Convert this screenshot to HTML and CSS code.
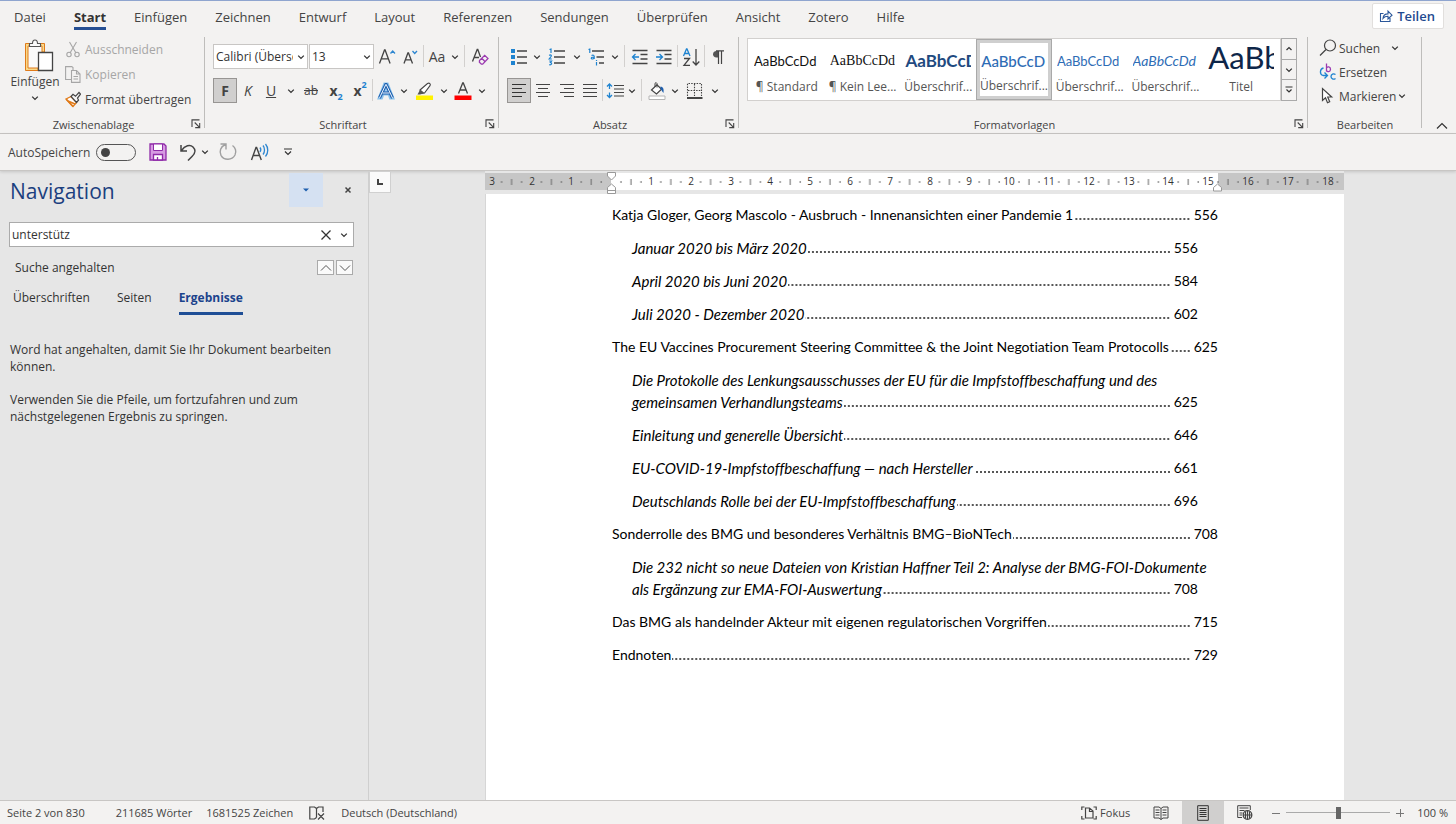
FILE: index.html
```html
<!DOCTYPE html>
<html lang="de">
<head>
<meta charset="utf-8">
<title>Navigation</title>
<link rel="stylesheet" href="styles.css">
</head>
<body>
<svg class="defs" aria-hidden="true">
  <symbol id="chev" viewBox="0 0 8 8"><path d="M1.2 2.6 4 5.4 6.8 2.6" fill="none" stroke="#333" stroke-width="1.3"/></symbol>
  <symbol id="launch" viewBox="0 0 10 10"><path d="M1 8V.9H8.500M3.700 3.500 8.300 8.100M8.700 4V8.600H4.200" fill="none" stroke="#444" stroke-width="1.100"/></symbol>
</svg>

<header class="tabbar">
  <nav class="tabs">
    <button>Datei</button><button class="active">Start</button><button>Einfügen</button><button>Zeichnen</button><button>Entwurf</button><button>Layout</button><button>Referenzen</button><button>Sendungen</button><button>Überprüfen</button><button>Ansicht</button><button>Zotero</button><button>Hilfe</button>
  </nav>
  <button class="share"><svg width="14" height="14" viewBox="0 0 14 14" fill="none" stroke="#2b579a" stroke-width="1.100"><path d="M4.500 4.500H1.500v8h9.500V9M4 9.500c.3-3 2-4.600 5-4.600V2.200l4 4-4 3.700V7.300C7 7.200 5.300 7.900 4 9.500z"/></svg>Teilen</button>
</header>

<div class="ribbon">
  <section class="group clipboard">
    <div class="content">
      <button class="paste">
        <svg width="32" height="34" viewBox="0 0 32 34" fill="none"><path d="M4.500 5.500h17V13H16v17.500H4.500z" fill="#fafafa"/><path d="M8 4.500H3.500v27H16V29H6V7h2zM18 4.500h4.500V13H20V7h-2z" fill="#f8d98a" stroke="#e07b1a"/><path d="M7.500 7.500h11v-3h-3C15.500 2 14.500 1 13 1s-2.500 1-2.500 3.500h-3z" fill="#fafafa" stroke="#555" stroke-width="1.100"/><path d="M16.500 13.500h14v18h-14z" fill="#fff" stroke="#444" stroke-width="1.300"/></svg>
        <span>Einfügen</span><svg class="chev"><use href="#chev"/></svg>
      </button>
      <div class="stack">
        <button class="off"><svg width="16" height="17" viewBox="0 0 16 17" fill="none" stroke="#a6a6a6" stroke-width="1.100"><path d="M4.500 1 11 12M11.500 1 5 12"/><circle cx="4" cy="13.500" r="2.200"/><circle cx="12" cy="13.500" r="2.200"/></svg>Ausschneiden</button>
        <button class="off"><svg width="16" height="17" viewBox="0 0 16 17" fill="none" stroke="#a6a6a6" stroke-width="1.100"><path d="M6 13.500H.6V.6h6.200l1.200 1V4"/><path d="M6.500 4.500h5l3.500 3.500v8.400H6.500zM11.500 4.500V8H15M8.500 10.500h4.500M8.500 13h4.500"/></svg>Kopieren</button>
        <button><svg width="16" height="17" viewBox="0 0 16 17" fill="none"><path d="m1 8 5-2.500 5.500 6L8 15.500z" fill="#fff" stroke="#e07b1a" stroke-width="1.300"/><path d="m3 10 7 3M1.500 8.500 8 15.500" stroke="#e07b1a" stroke-width="1.500"/><path d="m6 5.500 2-2.200 2.500 2L14 1.500l1.500 1.600-3 4 1 2-2 2.400z" fill="#f5f5f5" stroke="#444" stroke-width="1.200"/></svg>Format übertragen</button>
      </div>
    </div>
    <footer><span>Zwischenablage</span><button class="launcher" aria-label="Zwischenablage öffnen"><svg width="10" height="10"><use href="#launch"/></svg></button></footer>
  </section>

  <section class="group font">
    <div class="content rows">
      <div class="row">
        <select class="family" aria-label="Schriftart"><option>Calibri (Überschriften)</option></select>
        <select class="size" aria-label="Schriftgrad"><option>13</option></select>
        <button class="w22" aria-label="Größer"><svg width="18" height="18" viewBox="0 0 18 18" fill="none"><path d="M1.500 15.500 6.500 2h.6l5 13.500M3.300 10.800h7" stroke="#444" stroke-width="1.300"/><path d="m12.500 5.500 2.200-2.500L17 5.500" stroke="#2d86d0" stroke-width="1.300"/></svg></button>
        <button class="w24" aria-label="Kleiner"><svg width="18" height="18" viewBox="0 0 18 18" fill="none"><path d="M3 15.500 6.900 5h.6l4 10.500M4.500 11.800h5.400" stroke="#444" stroke-width="1.300"/><path d="m11.500 3 2.200 2.500L16 3" stroke="#2d86d0" stroke-width="1.300"/></svg></button>
        <i class="sep"></i>
        <button class="w24 aa">Aa</button><button class="w12" aria-label="Optionen"><svg class="chev"><use href="#chev"/></svg></button>
        <i class="sep wide"></i>
        <button class="w24" aria-label="Formatierung löschen"><svg width="18" height="18" viewBox="0 0 18 18" fill="none"><path d="M1.500 13.500 6.200 1.500h.6L9.500 9M3.200 9.500H8" stroke="#444" stroke-width="1.300"/><path d="m8.500 12.500 5.200-5.200 3.300 3.200-5.300 5.700h-1.300l-2-2zM10.700 10.300l3.500 3.500" stroke="#9b3ab0" stroke-width="1.300"/></svg></button>
      </div>
      <div class="row">
        <button class="w24 on"><b>F</b></button>
        <button class="w22"><em>K</em></button>
        <button class="w24"><u>U</u></button><button class="w16" aria-label="Optionen"><svg class="chev"><use href="#chev"/></svg></button>
        <button class="w24"><s>ab</s></button>
        <button class="w26 script"><b>x</b><sub>2</sub></button>
        <button class="w22 script"><b>x</b><sup>2</sup></button>
        <i class="sep"></i>
        <button class="w24" aria-label="Texteffekte"><svg width="18" height="18" viewBox="0 0 18 18" fill="none"><path d="M1.500 16.500 7.300 1.500h3.400l5.800 15h-3.400l-1.400-4H6.300l-1.400 4zM7.200 9.700h3.600L9 4.500z" fill="#d8ebfa" stroke="#8cc4ee" stroke-width="2"/><path d="M2.500 16 8.800 2.500h.4L15.500 16M5.500 11h7" stroke="#1e5fae" stroke-width="3"/><path d="M2.500 16 8.800 2.500h.4L15.500 16M5.500 11h7" stroke="#eef7ff" stroke-width="1"/></svg></button><button class="w12" aria-label="Optionen"><svg class="chev"><use href="#chev"/></svg></button>
        <button class="w28" aria-label="Hervorheben"><svg width="18" height="18" viewBox="0 0 18 18"><path d="m5 8 7.500-6.500c2-1 3.500.4 2.500 2.200L9.500 11 7 11.200z" fill="#fff" stroke="#444" stroke-width="1.100"/><path d="M5.200 7.500 9.600 11l-2 .8L5 12.500H2.500z" fill="#555"/><path d="M1 13.500h17V18H1z" fill="#fff200"/></svg></button><button class="w12" aria-label="Optionen"><svg class="chev"><use href="#chev"/></svg></button>
        <button class="w26" aria-label="Schriftfarbe"><svg width="18" height="18" viewBox="0 0 18 18"><path d="M4.500 11.500 8.700 1h.6l4.200 10.500M6 8h6" fill="none" stroke="#444" stroke-width="1.300"/><path d="M.5 13.500h17V18H.5z" fill="#f00"/></svg></button><button class="w12" aria-label="Optionen"><svg class="chev"><use href="#chev"/></svg></button>
      </div>
    </div>
    <footer><span>Schriftart</span><button class="launcher" aria-label="Schriftart öffnen"><svg width="10" height="10"><use href="#launch"/></svg></button></footer>
  </section>

  <section class="group para">
    <div class="content rows">
      <div class="row">
        <button class="w24" aria-label="Aufzählung"><svg width="18" height="18" viewBox="0 0 18 18"><path d="M1 1h4v4H1zM1 7h4v4H1zM1 13h4v4H1z" fill="#1e83d0"/><path d="M7 3h10M7 9h10M7 15h10" stroke="#444" stroke-width="1.300"/></svg></button><button class="w12" aria-label="Optionen"><svg class="chev"><use href="#chev"/></svg></button>
        <button class="w28" aria-label="Nummerierung"><svg width="18" height="18" viewBox="0 0 18 18"><path d="M1.500 1.500 3 1v4M1.200 7.500c1-1 2.600-.4 2 .8L1.200 11h2.600M1.200 13h2.400l-1.200 1.500c2 .3 1.500 2.700-1.200 2.200" fill="none" stroke="#1e83d0" stroke-width="1.200"/><path d="M6 3h11M6 9h11M6 15h11" stroke="#444" stroke-width="1.300"/></svg></button><button class="w12" aria-label="Optionen"><svg class="chev"><use href="#chev"/></svg></button>
        <button class="w26" aria-label="Liste mit mehreren Ebenen"><svg width="18" height="18" viewBox="0 0 18 18"><path d="M1.500 1.500 2.800 1v4M4.500 7.500c1.500-.7 2.700-.3 2.700 1V11M7 9c-1.500 0-2.700.3-2.700 1.200 0 1.200 2.200 1 2.700-.2M9.500 14v3.500M9.500 12v1" fill="none" stroke="#1e83d0" stroke-width="1.200"/><path d="M5 3h12M9.500 9H17M12 15h5" stroke="#444" stroke-width="1.300"/></svg></button><button class="w12" aria-label="Optionen"><svg class="chev"><use href="#chev"/></svg></button>
        <i class="sep wide"></i>
        <button class="w24" aria-label="Einzug verkleinern"><svg width="18" height="18" viewBox="0 0 18 18" fill="none"><path d="M1.500 2.500h15M9.500 6.500h7M9.500 11h7M1.500 15.500h15" stroke="#444" stroke-width="1.300"/><path d="M8 9H1.500M4.500 6l-3 3 3 3" stroke="#1e83d0" stroke-width="1.300"/></svg></button>
        <button class="w24" aria-label="Einzug vergrößern"><svg width="18" height="18" viewBox="0 0 18 18" fill="none"><path d="M1.500 2.500h15M9.500 6.500h7M9.500 11h7M1.500 15.500h15" stroke="#444" stroke-width="1.300"/><path d="M1 9h6.500M4.500 6l3 3-3 3" stroke="#1e83d0" stroke-width="1.300"/></svg></button>
        <i class="sep"></i>
        <button class="w24" aria-label="Sortieren"><svg width="18" height="20" viewBox="0 0 18 20" fill="none"><path d="M1.500 9 4.500 2h.5l3 7M2.500 6.500H7" stroke="#1e83d0" stroke-width="1.300"/><path d="M2 11.500h5.500l-5.500 6.800h6M14 2v16M10.700 14.500 14 18l3.300-3.500" stroke="#444" stroke-width="1.300"/></svg></button>
        <i class="sep"></i>
        <button class="w24" aria-label="Formatierungszeichen"><svg width="14" height="18" viewBox="0 0 14 18"><path d="M7 3H5.500C3.200 3 2 4.500 2 6.200s1.300 3.200 3.500 3.200H7z" fill="#555"/><path d="M7.500 16V3M10.500 16V3M5 2.800h8" fill="none" stroke="#444" stroke-width="1.200"/></svg></button>
      </div>
      <div class="row">
        <button class="w24 on" aria-label="Linksbündig"><svg width="16" height="16" viewBox="0 0 16 16" stroke="#333" stroke-width="1.200"><path d="M1 1.500h14M1 5.500h10M1 9.500h14M1 13.500h10"/></svg></button>
        <button class="w24" aria-label="Zentriert"><svg width="16" height="16" viewBox="0 0 16 16" stroke="#444" stroke-width="1.200"><path d="M1 1.500h14M3 5.500h10M1 9.500h14M3 13.500h10"/></svg></button>
        <button class="w24" aria-label="Rechtsbündig"><svg width="16" height="16" viewBox="0 0 16 16" stroke="#444" stroke-width="1.200"><path d="M1 1.500h14M5 5.500h10M1 9.500h14M5 13.500h10"/></svg></button>
        <button class="w22" aria-label="Blocksatz"><svg width="16" height="16" viewBox="0 0 16 16" stroke="#444" stroke-width="1.200"><path d="M1 1.500h14M1 5.500h14M1 9.500h14M1 13.500h14"/></svg></button>
        <i class="sep"></i>
        <button class="w22" aria-label="Zeilenabstand"><svg width="18" height="18" viewBox="0 0 18 18" fill="none"><path d="M8 3.500h10M8 7h10M8 10.500h10M8 14h10" stroke="#444" stroke-width="1.200"/><path d="M3.500 2v5M1 4.500 3.500 2 6 4.500M3.500 10.500v5M1 13l2.500 2.500L6 13" stroke="#1e83d0" stroke-width="1.300"/></svg></button><button class="w12" aria-label="Optionen"><svg class="chev"><use href="#chev"/></svg></button>
        <i class="sep wide"></i>
        <button class="w24" aria-label="Schattierung"><svg width="18" height="18" viewBox="0 0 18 18"><path d="m3.500 8 5.500-5.200 4.500 4.400L8.500 12z" fill="#fff" stroke="#444" stroke-width="1.200"/><path d="M9 5.500V1.500c-.8-1.500-2-1-2 .5v3" fill="none" stroke="#444"/><path d="M12.500 4.500c3 .3 3.500 3 3 6.500-1.500-1-1.500-3-3-4z" fill="#1e5fae"/><path d="M1 14h16v3.500H1z" fill="#fff" stroke="#b5b5b5"/></svg></button><button class="w12" aria-label="Optionen"><svg class="chev"><use href="#chev"/></svg></button>
        <button class="w28" aria-label="Rahmen"><svg width="18" height="18" viewBox="0 0 18 18" fill="none"><path d="M1.500 14V1.500h14V14M8.500 2v12M2 8.500h13" stroke="#444" stroke-width="1.100" stroke-dasharray="1.500 1.200"/><path d="M1 16h15.500" stroke="#444" stroke-width="2"/></svg></button><button class="w12" aria-label="Optionen"><svg class="chev"><use href="#chev"/></svg></button>
      </div>
    </div>
    <footer><span>Absatz</span><button class="launcher" aria-label="Absatz öffnen"><svg width="10" height="10"><use href="#launch"/></svg></button></footer>
  </section>

  <section class="group styles">
    <div class="content">
      <div class="gallery">
        <button><span class="sample s-std">AaBbCcDd</span><span class="name">¶ Standard</span></button>
        <button><span class="sample s-none">AaBbCcDd</span><span class="name">¶ Kein Lee...</span></button>
        <button><span class="sample s-h1">AaBbCcD</span><span class="name">Überschrif...</span></button>
        <button class="picked"><span class="sample s-h2">AaBbCcD</span><span class="name">Überschrif...</span></button>
        <button><span class="sample s-h3">AaBbCcDd</span><span class="name">Überschrif...</span></button>
        <button><span class="sample s-h4">AaBbCcDd</span><span class="name">Überschrif...</span></button>
        <button><span class="sample s-title">AaBb</span><span class="name">Titel</span></button>
      </div>
      <div class="pager">
        <button aria-label="Nach oben"><svg width="8" height="8" viewBox="0 0 8 8"><path d="M1.500 5 4 2.500 6.500 5" fill="none" stroke="#333" stroke-width="1.200"/></svg></button>
        <button aria-label="Nach unten"><svg class="chev"><use href="#chev"/></svg></button>
        <button aria-label="Mehr"><svg width="8" height="8" viewBox="0 0 8 8"><path d="M.5 1h7M1.500 3.500 4 6l2.500-2.500" fill="none" stroke="#333" stroke-width="1.200"/></svg></button>
      </div>
    </div>
    <footer><span>Formatvorlagen</span><button class="launcher" aria-label="Formatvorlagen öffnen"><svg width="10" height="10"><use href="#launch"/></svg></button></footer>
  </section>

  <section class="group edit">
    <div class="content stack">
      <button><svg width="18" height="18" viewBox="0 0 18 18" fill="none" stroke="#444" stroke-width="1.200"><circle cx="11" cy="6.500" r="5.500"/><path d="M7 10.500 1 16.500"/></svg>Suchen<svg class="chev far"><use href="#chev"/></svg></button>
      <button><svg width="18" height="18" viewBox="0 0 18 18" fill="none"><path d="M7.500.5v8M7.500 5c.8-1.800 4-1.500 4 1.200S8.300 9.300 7.500 7.500" stroke="#9b3ab0" stroke-width="1.300"/><path d="M16.500 11.500c-2-1.500-4.500-.3-4.500 2s2.500 3.400 4.500 1.900M4.500 5C.5 6 .5 11.500 4 12.500h4M5.500 9.500l3 3-3 3" stroke="#1e83d0" stroke-width="1.300"/></svg>Ersetzen</button>
      <button><svg width="18" height="18" viewBox="0 0 18 18"><path d="M3.500 1.500v12l3-2.700 2 5 2.200-1-2-4.800h4z" fill="#fff" stroke="#444" stroke-width="1.200"/></svg>Markieren<svg class="chev"><use href="#chev"/></svg></button>
    </div>
    <footer><span>Bearbeiten</span></footer>
  </section>
  <button class="collapse" aria-label="Menüband reduzieren"><svg width="12" height="8" viewBox="0 0 12 8"><path d="m1 6.500 5-5 5 5" fill="none" stroke="#333" stroke-width="1.200"/></svg></button>
</div>

<div class="quick">
  <label>AutoSpeichern<input type="checkbox" role="switch"></label>
  <button class="w22" aria-label="Speichern"><svg width="18" height="18" viewBox="0 0 18 18"><path d="M1 1h14l2 2v14H1z" fill="#d69be2" stroke="#8f2aa8" stroke-width="1.300"/><path d="M4.500 1h9v6.500h-9z" fill="#fff" stroke="#8f2aa8"/><path d="M4.500 11.500h9V17h-9zM8.500 14v3" fill="#fff" stroke="#8f2aa8" stroke-width="1.300"/></svg></button>
  <button class="undo" aria-label="Rückgängig"><svg width="18" height="18" viewBox="0 0 18 18" fill="none" stroke="#444" stroke-width="1.500"><path d="M2 2v6h6M2.500 7.500C6 2.500 11 1 14 4s2.500 6-1 9.500l-4 4"/></svg></button><button class="w12" aria-label="Optionen"><svg class="chev"><use href="#chev"/></svg></button>
  <button class="redo" aria-label="Wiederholen"><svg width="20" height="20" viewBox="0 0 20 20" fill="none" stroke="#a0a0a0" stroke-width="1.400"><path d="M14.500 3.500c3 2 4.200 6.200 2.500 9.500-3 5.500-11 5.700-14 .3C1 9.500 2.500 4.500 7.500 2.500M2.500 2h5.500v5.500"/></svg></button>
  <button class="w22" aria-label="Laut vorlesen"><svg width="20" height="18" viewBox="0 0 20 18" fill="none"><path d="M1.500 17 6 4.500h.6L11.300 17M3 12.500h7" stroke="#444" stroke-width="1.400"/><path d="M10 4.500c1 1.300 1 3 0 4.500M13 2.500c2 2.500 2 6.500 0 9M15.500 1c3 3.500 3 9 0 12.500" stroke="#2d86d0" stroke-width="1.300"/></svg></button>
  <button class="more" aria-label="Anpassen"><svg width="10" height="8" viewBox="0 0 10 8"><path d="M1 1h8M2 3.500 5 6.500l3-3" fill="none" stroke="#333" stroke-width="1.200"/></svg></button>
</div>

<main>
  <aside>
    <div class="nav-head"><h1>Navigation</h1>
      <button class="drop" aria-label="Aufgabenbereichsoptionen"><svg width="6" height="4" viewBox="0 0 6 4"><path d="M0 .5h6L3 3.500z" fill="#1e5fae"/></svg></button>
      <button class="close" aria-label="Schließen"><svg width="8" height="8" viewBox="0 0 8 8"><path d="m1.500 1.500 5 5M6.500 1.500l-5 5" stroke="#444" stroke-width="1.500"/></svg></button>
    </div>
    <div class="search"><input type="text" value="unterstütz" aria-label="Dokument durchsuchen"><button aria-label="Löschen"><svg width="12" height="12" viewBox="0 0 12 12"><path d="m1.500 1.500 9 9M10.500 1.500l-9 9" stroke="#333" stroke-width="1.300"/></svg></button><button aria-label="Suchoptionen"><svg class="chev"><use href="#chev"/></svg></button></div>
    <div class="state"><span>Suche angehalten</span>
      <button aria-label="Vorheriges"><svg width="12" height="8" viewBox="0 0 12 8"><path d="m1 6.500 5-5 5 5" fill="none" stroke="#555"/></svg></button><button aria-label="Nächstes"><svg width="12" height="8" viewBox="0 0 12 8"><path d="m1 1.500 5 5 5-5" fill="none" stroke="#555"/></svg></button>
    </div>
    <div class="nav-tabs"><button>Überschriften</button><button>Seiten</button><button class="active">Ergebnisse</button></div>
    <p>Word hat angehalten, damit Sie Ihr Dokument bearbeiten können.</p>
    <p>Verwenden Sie die Pfeile, um fortzufahren und zum nächstgelegenen Ergebnis zu springen.</p>
  </aside>

  <div class="workspace">
    <button class="tabstop" aria-label="Tabstopp"><svg width="8" height="8" viewBox="0 0 8 8"><path d="M2 1v5h5" fill="none" stroke="#444" stroke-width="2"/></svg></button>
    <div class="sheet">
      <svg class="ruler" height="23" viewBox="0 0 859 23" preserveAspectRatio="xMinYMin slice">
        <defs><pattern id="ticks" x="6.600" y="0" width="39.800" height="24" patternUnits="userSpaceOnUse"><path d="M10 10v2M30 10v2M20 8v6" stroke="#666"/></pattern></defs>
        <path d="M0 2h859v17H0z" fill="#c6c6c6"/><path d="M126 2h607v17H126z" fill="#fff"/><path d="M0 2h859v17H0z" fill="url(#ticks)"/>
        <g class="nums"><text x="7" y="14">3</text><text x="47" y="14">2</text><text x="86" y="14">1</text><text x="166" y="14">1</text><text x="206" y="14">2</text><text x="246" y="14">3</text><text x="285" y="14">4</text><text x="325" y="14">5</text><text x="365" y="14">6</text><text x="405" y="14">7</text><text x="445" y="14">8</text><text x="484" y="14">9</text><text x="524" y="14">10</text><text x="564" y="14">11</text><text x="604" y="14">12</text><text x="644" y="14">13</text><text x="683" y="14">14</text><text x="723" y="14">15</text><text x="763" y="14">16</text><text x="803" y="14">17</text><text x="843" y="14">18</text></g>
        <path d="M122.500 1.500h8V5l-4 4-4-4zM126.500 13l4 3.500v6h-8v-6zM122.500 19.500h8M732.500 13l4 3.500v3.500h-8v-3.500z" fill="#fff" stroke="#999"/>
      </svg>
      <article class="page">
        <a href="#"><span>Katja Gloger, Georg Mascolo - Ausbruch - Innenansichten einer Pandemie 1</span><i></i><b>556</b></a>
        <a href="#" class="sub"><span>Januar 2020 bis März 2020</span><i></i><b>556</b></a>
        <a href="#" class="sub"><span>April 2020 bis Juni 2020</span><i></i><b>584</b></a>
        <a href="#" class="sub"><span>Juli 2020 - Dezember 2020</span><i></i><b>602</b></a>
        <a href="#"><span>The EU Vaccines Procurement Steering Committee &amp; the Joint Negotiation Team Protocolls</span><i></i><b>625</b></a>
        <a href="#" class="sub"><span class="full">Die Protokolle des Lenkungsausschusses der EU für die Impfstoffbeschaffung und des</span><span>gemeinsamen Verhandlungsteams</span><i></i><b>625</b></a>
        <a href="#" class="sub"><span>Einleitung und generelle Übersicht</span><i></i><b>646</b></a>
        <a href="#" class="sub"><span>EU-COVID-19-Impfstoffbeschaffung — nach Hersteller</span><i></i><b>661</b></a>
        <a href="#" class="sub"><span>Deutschlands Rolle bei der EU-Impfstoffbeschaffung</span><i></i><b>696</b></a>
        <a href="#"><span>Sonderrolle des BMG und besonderes Verhältnis BMG–BioNTech</span><i></i><b>708</b></a>
        <a href="#" class="sub"><span class="full">Die 232 nicht so neue Dateien von Kristian Haffner Teil 2: Analyse der BMG-FOI-Dokumente</span><span>als Ergänzung zur EMA-FOI-Auswertung</span><i></i><b>708</b></a>
        <a href="#"><span>Das BMG als handelnder Akteur mit eigenen regulatorischen Vorgriffen</span><i></i><b>715</b></a>
        <a href="#"><span>Endnoten</span><i></i><b>729</b></a>
      </article>
    </div>
  </div>
</main>

<footer class="status">
  <span class="pages">Seite 2 von 830</span><span class="words">211685 Wörter</span><span>1681525 Zeichen</span>
  <button class="proof" aria-label="Rechtschreibung"><svg width="16" height="14" viewBox="0 0 16 14" fill="none" stroke="#444" stroke-width="1.200"><path d="M7.500 11.500 5.500 13H.8V1h4.700l2 1.500L9.500 1H14v5M7.500 2.500v9M9 7.500l6 6M15 7.500l-6 6"/></svg></button>
  <span>Deutsch (Deutschland)</span>
  <div class="views">
    <button class="focus"><svg width="16" height="14" viewBox="0 0 16 14" fill="none" stroke="#444" stroke-width="1.200"><path d="M3.500 1H.8v3M.8 10v3h2.700M12.500 13h2.700v-3M15.200 4V1h-2.700M4.500 2h4L12 5v7H4.500zM8.500 2v3.500H12"/></svg>Fokus</button>
    <button class="view" aria-label="Lesemodus"><svg width="16" height="14" viewBox="0 0 16 14" fill="none" stroke="#444"><path d="M8 2.500 6 1H1v11h5l2 1.500L10 12h5V1h-5zM8 2.500v11M2.500 4h4M2.500 6.500h4M2.500 9h4M9.500 4h4M9.500 6.500h4M9.500 9h4"/></svg></button>
    <button class="view on" aria-label="Seitenlayout"><svg width="12" height="16" viewBox="0 0 12 16" fill="none" stroke="#333"><path d="M.7.700h10.600v14.600H.7zM2.500 3.500h7M2.500 5.500h7M2.500 7.500h7M2.500 9.500h7M2.500 11.500h7" /></svg></button>
    <button class="view" aria-label="Weblayout"><svg width="16" height="15" viewBox="0 0 16 15" fill="none" stroke="#444"><path d="M5 12.500H.7V.7h12.600V5M2.500 3h9M2.500 5.500h5M2.500 8h3M2.500 10h2.500"/><circle cx="10.500" cy="10" r="4.300" fill="#ddd" stroke-width="1.300"/><path d="M6.500 10h8M10.500 6v8M8.500 6.500v7M12.500 6.500v7"/></svg></button>
    <button class="zoomer" aria-label="Verkleinern"><svg width="10" height="10"><path d="M1 5.500h8" stroke="#777"/></svg></button>
    <input type="range" min="0" max="100" value="50" aria-label="Zoom">
    <button class="zoomer" aria-label="Vergrößern"><svg width="10" height="10"><path d="M1 5.500h8M5.500 1v8" stroke="#777"/></svg></button>
    <span class="pct">100 %</span>
  </div>
</footer>
</body>
</html>
```
FILE: styles.css
```css
* { box-sizing: border-box; }
body {
  margin: 0;
  min-height: 100vh;
  display: flex;
  flex-direction: column;
  background: #e6e6e6;
  color: #444;
  font: 12px/17px "Open Sans", "Noto Sans", sans-serif;
}
button {
  margin: 0;
  padding: 0;
  border: 0;
  background: none;
  color: inherit;
  font: inherit;
  white-space: nowrap;
}
button, label { display: flex; align-items: center; }
svg { display: block; flex: none; }
.defs { position: absolute; width: 0; height: 0; }
.chev { width: 8px; height: 8px; }

.tabbar {
  display: flex;
  justify-content: space-between;
  height: 36px;
  padding: 0 12px 0 14px;
  border-top: 1px solid #8fa5cf;
  background: #f3f2f1;
}
.tabs { display: flex; gap: 28px; font-size: 13px; }
.tabs button { position: relative; height: 32px; }
.tabs .active { font-weight: 700; color: #333; }
.tabs .active::after {
  content: "";
  position: absolute;
  inset: auto 0 3px;
  height: 3px;
  background: #254f93;
}
.share {
  gap: 4px;
  height: 26px;
  margin-top: 2px;
  padding: 0 8px 0 6px;
  border: 1px solid #e1dfdd;
  border-radius: 2px;
  background: #fff;
  color: #1f4a90;
  font-weight: 600;
  font-size: 13px;
}

.ribbon {
  display: flex;
  height: 98px;
  padding-top: 1px;
  border-bottom: 1px solid #c8c6c4;
  background: #f3f2f1;
}
.group {
  position: relative;
  display: flex;
  flex: none;
  flex-direction: column;
  justify-content: space-between;
}
.group::after {
  content: "";
  position: absolute;
  inset: 0 0 5px auto;
  width: 1px;
  background: #bebdbb;
}
.group footer {
  display: flex;
  justify-content: center;
  height: 17px;
  font-size: 11px;
}
.launcher { position: absolute; right: 4px; bottom: 4px; }
.content { display: flex; }
.clipboard { width: 205px; }
.font { width: 294px; }
.para { width: 240px; }
.styles { flex: 1; min-width: 0; }
.edit { width: 114px; }
.clipboard footer, .font footer, .para footer, .styles footer { padding-right: 18px; }

.clipboard .content { padding-left: 10px; gap: 5px; }
.paste { flex-direction: column; width: 50px; padding-top: 2px; }
.paste svg:first-child { margin-left: 6px; }
.paste .chev { margin-top: 4px; }
.stack { display: flex; flex-direction: column; }
.clipboard .stack button { gap: 4px; height: 25px; }
.off { color: #a6a6a6; }

.rows { flex-direction: column; gap: 9px; padding: 7px 0 0 8px; }
.row { display: flex; height: 25px; }
.row button, .quick button { justify-content: center; height: 25px; }
.w12 { width: 12px; }
.w16 { width: 16px; }
.w22 { width: 22px; }
.w24 { width: 24px; }
.w26 { width: 26px; }
.w28 { width: 28px; }
.row .on { background: #d0cfce; border: 1px solid #979593; }
.sep { flex: none; width: 1px; height: 22px; margin: 1px 1px 0; background: #d2d0ce; }
.sep.wide { margin: 1px 3px 0; }
.row select {
  appearance: none;
  height: 25px;
  padding: 0 14px 0 2px;
  border: 1px solid #c8c6c4;
  border-radius: 0;
  background: #fff url("data:image/svg+xml,%3Csvg xmlns='http://www.w3.org/2000/svg' width='8' height='8'%3E%3Cpath d='M1.200 2.600 4 5.400 6.800 2.600' fill='none' stroke='%23333' stroke-width='1.300'/%3E%3C/svg%3E") no-repeat right 2px center;
  color: #333;
  font: inherit;
}
.family { width: 95px; margin-right: 1px; }
.size { width: 65px; margin-right: 2px; }
.aa { font-size: 14px; }
.row b, .row em, .row u { font-size: 14px; }
.script sub, .script sup { color: #1e83d0; font-size: 9px; font-weight: 700; line-height: 9px; }
.script sub { align-self: flex-end; margin-bottom: 2px; }
.script sup { align-self: flex-start; margin-top: 2px; }

.styles .content { padding: 1px 11px 0 8px; }
.gallery {
  display: flex;
  flex: 1;
  height: 63px;
  padding: 0 1px;
  border: 1px solid #d2d0ce;
  background: #fff;
  overflow: hidden;
}
.gallery button {
  flex-direction: column;
  flex: 1;
  min-width: 0;
  padding: 0 5px;
  color: #555;
}
.gallery .picked {
  padding: 0 1px;
  outline: 1px solid #a9a9a9;
  outline-offset: -1px;
  border: 4px solid #cfcfcf;
}
.sample {
  width: 100%;
  height: 38px;
  overflow: hidden;
  text-align: left;
  font: 14px/44px Lato, sans-serif;
  color: #111;
}
.name { display: block; line-height: 20px; }
.picked .sample { height: 34px; line-height: 36px; }
.s-std, .s-h3 { font-size: 13px; }
.s-none { font-family: "Liberation Serif", serif; }
.s-h1 { color: #1f4a80; font-size: 17px; font-weight: 700; }
.s-h2 { color: #2e6cb5; font-size: 15px; font-weight: 500; }
.s-h3, .s-h4 { color: #2e6cb5; }
.s-h4 { font-style: italic; }
.s-title { color: #0e2649; font-size: 31px; line-height: 36px; }
.pager { display: flex; flex-direction: column; width: 16px; height: 63px; }
.pager button { flex: 1; justify-content: center; border: 1px solid #aaa; }
.pager button + button { border-top: 0; }

.edit .content { gap: 2px; padding: 0 0 0 11px; }
.edit .stack button { gap: 2px; height: 22px; }
.edit .far { margin-left: 9px; }
.collapse { align-self: flex-end; margin: 0 0 3px 14px; width: 20px; }

.quick {
  display: flex;
  align-items: center;
  height: 37px;
  padding-left: 8px;
  border-bottom: 1px solid #c8c6c4;
  background: #f3f2f1;
  box-shadow: 0 1px 3px rgba(0, 0, 0, .15);
}
.quick label { gap: 6px; margin-right: 11px; }
.quick input {
  appearance: none;
  width: 40px;
  height: 17px;
  margin: 0;
  padding: 3px 4px;
  border: 1px solid #555;
  border-radius: 9px;
}
.quick input::before {
  content: "";
  display: block;
  width: 9px;
  height: 9px;
  border-radius: 50%;
  background: #444;
}
.quick .undo { width: 22px; margin-left: 8px; }
.quick .redo { width: 22px; margin: 0 10px 0 6px; }
.quick .more { margin-left: 12px; }

main { display: flex; flex: 1; }
aside {
  flex: none;
  width: 369px;
  padding: 2px 14px 0 9px;
  border-right: 1px solid #cfcfcf;
  color: #333;
}
.nav-head { display: flex; height: 34px; }
h1 {
  flex: 1;
  margin: 0;
  padding-left: 1px;
  color: #1b3f7f;
  font-size: 21px;
  font-weight: 400;
  line-height: 36px;
}
.drop { justify-content: center; width: 34px; background: #d5e1f2; }
.close { justify-content: center; width: 20px; margin-left: 15px; margin-right: -4px; }
.search {
  display: flex;
  height: 25px;
  margin-top: 15px;
  border: 1px solid #ababab;
  background: #fff;
}
.search input {
  flex: 1;
  min-width: 0;
  padding: 0 2px;
  border: 0;
  background: none;
  color: #333;
  font: inherit;
}
.search button { justify-content: center; width: 18px; }
.state { display: flex; align-items: center; gap: 2px; margin-top: 12px; padding: 0 1px 0 6px; }
.state span { flex: 1; }
.state button { justify-content: center; width: 17px; height: 15px; border: 1px solid #aaa; background: #fafafa; }
.nav-tabs { display: flex; gap: 27px; margin-top: 11px; padding-left: 4px; }
.nav-tabs button { height: 28px; padding-bottom: 5px; border-bottom: 3px solid transparent; }
.nav-tabs .active { border-color: #1f4e96; color: #1b438c; font-weight: 700; }
aside p { margin: 0 0 16px; padding-left: 1px; }
.nav-tabs + p { margin-top: 26px; }

.workspace { display: grid; flex: 1; grid-template-columns: minmax(24px, 1fr) 859px minmax(0, 112px); }
.tabstop {
  justify-content: center;
  width: 22px;
  height: 22px;
  border: 1px solid #d0d0d0;
  background: #fafafa;
}
.sheet { display: flex; flex-direction: column; }
.ruler { width: 100%; height: 23px; background: #e6e6e6; }
.nums { fill: #333; font-size: 10px; text-anchor: middle; }
.page {
  flex: 1;
  padding: 10px 126px 0;
  border-left: 1px solid #d6d6d6;
  background: #fff;
  color: #000;
  font: 14px/22px Lato, sans-serif;
  font-variant-ligatures: none;
}
.page a {
  display: flex;
  flex-wrap: wrap;
  margin-bottom: 11px;
  color: inherit;
  text-decoration: none;
}
.page span { white-space: nowrap; }
.page .full { width: 100%; }
.page .sub { margin-left: 20px; margin-right: 20px; }
.sub span { font-size: 15px; font-style: italic; }
.page i {
  flex: 1;
  margin: 0 3px 0 1px;
  background: radial-gradient(circle at 2px 14px, #111 0, #111 .5px, transparent 1.200px) right 0 top 1px / 4px 22px repeat-x;
}
.page b { font-weight: 400; }

.status {
  display: flex;
  align-items: center;
  height: 24px;
  padding: 0 8px 0 7px;
  border-top: 1px solid #c8c6c4;
  background: #f3f2f1;
  font-size: 11px;
}
.pages { margin-right: 31px; }
.words { margin-right: 14px; }
.proof { margin: 0 16px; }
.views { display: flex; align-items: center; align-self: stretch; margin-left: auto; }
.focus { gap: 3px; margin-right: 10px; }
.view { justify-content: center; width: 42px; height: 23px; }
.view.on { background: #d0cfce; }
.zoomer { justify-content: center; width: 20px; }
.status input {
  appearance: none;
  width: 104px;
  height: 14px;
  margin: 0;
  background: linear-gradient(#aaa, #aaa) center / 100% 1px no-repeat;
}
.status input::-webkit-slider-thumb { appearance: none; width: 5px; height: 12px; background: #666; }
.pct { margin-left: 7px; }
```
